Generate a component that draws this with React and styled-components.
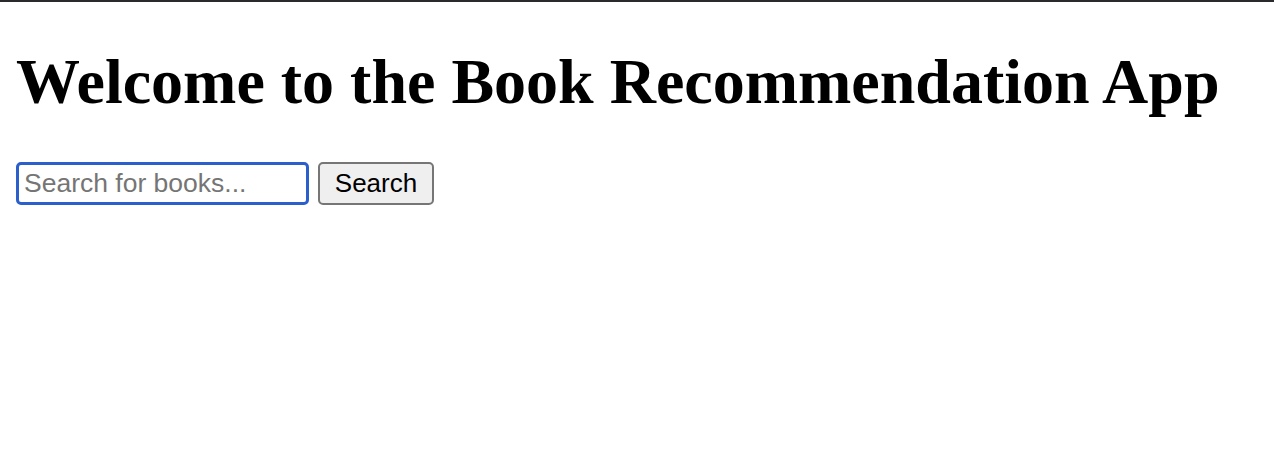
import React from "react";
import styled, { createGlobalStyle } from "styled-components";

const GlobalStyle = createGlobalStyle`
  html, body {
    margin: 0;
    padding: 0;
    background: #ffffff;
  }
  body {
    font-family: "Liberation Serif", "Times New Roman", serif;
    color: #000;
  }
`;

const Page = styled.div`
  border-top: 2px solid #2a2a2c;
  padding: 0 16px;
  min-height: 468px;
`;

const Title = styled.h1`
  font-family: "Liberation Serif", "Times New Roman", serif;
  font-size: 64px;
  font-weight: bold;
  line-height: 74px;
  margin: 43px 0 43px 0;
  white-space: nowrap;
`;

const SearchRow = styled.form`
  display: flex;
  align-items: center;
  gap: 9px;
`;

const SearchInput = styled.input`
  box-sizing: border-box;
  width: 293px;
  height: 43px;
  border: 3px solid #2b5fcc;
  border-radius: 5px;
  padding: 0 4px 0 5px;
  font-family: "Liberation Sans", Arial, sans-serif;
  font-size: 26.5px;
  color: #000;
  background: #fff;
  outline: none;

  &::placeholder {
    color: #757575;
  }
`;

const SearchButton = styled.button`
  box-sizing: border-box;
  width: 116px;
  height: 43px;
  border: 2px solid #767676;
  border-radius: 5px;
  background: #efefef;
  font-family: "Liberation Sans", Arial, sans-serif;
  font-size: 26px;
  color: #000;
  padding: 0;
  cursor: pointer;
`;

export default function App() {
  return (
    <>
      <GlobalStyle />
      <Page>
        <Title>Welcome to the Book Recommendation App</Title>
        <SearchRow onSubmit={(e) => e.preventDefault()}>
          <SearchInput type="text" placeholder="Search for books..." />
          <SearchButton type="submit">Search</SearchButton>
        </SearchRow>
      </Page>
    </>
  );
}
